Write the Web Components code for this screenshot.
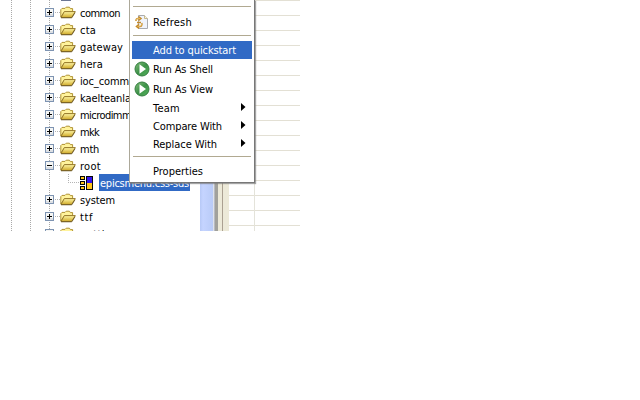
<!DOCTYPE html>
<html lang="en"><head><meta charset="utf-8"><title>Navigator</title>
<style>html,body{margin:0;background:#fff}body{width:640px;height:400px;overflow:hidden}</style></head><body>
<app-workbench></app-workbench>
<script>
const FONT = 'condensed 11px "DejaVu Sans Condensed","DejaVu Sans","Noto Sans",sans-serif';
const define = (name, html, setup) => customElements.define(name, class extends HTMLElement {
  connectedCallback() {
    if (this.shadowRoot) return;
    this.attachShadow({mode: 'open'}).innerHTML = html;
    if (setup) setup(this, this.shadowRoot);
  }
});
const add = (root, html) => {
  const t = document.createElement('template');
  t.innerHTML = html;
  root.append(t.content);
};

// A label whose tracking is adjusted to a requested width.
define('fit-label', `<style>:host{display:block;white-space:nowrap;font:${FONT};line-height:15px}span{display:inline-block}</style><span></span>`, (el, r) => {
  const s = r.querySelector('span');
  s.textContent = el.getAttribute('text');
  const w = +el.getAttribute('w');
  if (w) s.style.letterSpacing = (w - s.getBoundingClientRect().width) / s.textContent.length + 'px';
});

define('folder-icon', `<style>:host{display:block;width:16px;height:14px}svg{display:block}</style>
<svg width="16" height="14" viewBox="0 0 16 14"><defs><linearGradient id="g" x2="0" y2="1"><stop stop-color="#fff7a6"/><stop offset="1" stop-color="#cfa928"/></linearGradient></defs>
<path d="M.8 11V3.6L2 2.4h3l1.2-1.2h3.2l1 1.4h2.2v3.2H4.5z" fill="#fff39c" stroke="#b09232"/><path d="M1 11.5L4.3 5.6h11L11.6 11.5z" fill="url(#g)" stroke="#96792a"/><path d="M1 11.8h10.8l3.2-5" fill="none" stroke="#695724" stroke-width=".8"/></svg>`);

define('layout-icon', `<style>:host{display:block;width:13px;height:15px}svg{display:block}</style>
<svg width="13" height="15" shape-rendering="crispEdges"><path d="M0 1h5v4H0zM0 6h5v4H0zM0 11h5v4H0zM6 1h7v14H6z" fill="#080808"/><path d="M1 2h3v2H1zM1 7h3v2H1zM1 12h3v2H1zM7 8h5v6H7z" fill="#ffc51c"/><path d="M7 2h5v6H7z" fill="#3212ed"/></svg>`);

define('tree-toggle', `<style>:host{display:block;width:9px;height:9px}svg{display:block}</style>
<svg width="9" height="9" shape-rendering="crispEdges"><path d="M0 0h9v9H0z" fill="#7e94b2"/><path d="M1 1h7v7H1z" fill="#f5f6f5"/><path d="M1 6h7v2H1z" fill="#dcdfe3"/><path d="M2 4h5v1H2z" fill="#000"/><path class="v" d="M4 2h1v5H4z" fill="#000"/></svg>`, (el, r) => {
  if (el.hasAttribute('open')) r.querySelector('.v').remove();
});

define('tree-row', `<style>:host{display:grid;grid-template-columns:9px 6px 16px 1fr;align-items:center;height:17px;padding-left:45px}
i{height:1px;background:repeating-linear-gradient(90deg,transparent 0 1px,#b4b4b4 1px 2px)}
fit-label{margin-left:4px;margin-top:2px}
:host([leaf]){grid-template-columns:11px 13px 1fr;padding-left:69px;position:relative}
:host([leaf])::before{content:"";position:absolute;left:68px;top:0;height:9px;width:1px;background:repeating-linear-gradient(#b4b4b4 0 1px,transparent 1px 2px)}
.sel{background:#316ac5;color:#fff;margin-left:6px;width:91px;height:17px;padding:2px 0 0 1px;box-sizing:border-box}
.sel fit-label{margin:0}</style>`, (el, r) => {
  const t = el.getAttribute('text'), w = el.getAttribute('w'), label = `<fit-label text="${t}" w="${w}"></fit-label>`;
  add(r, el.hasAttribute('leaf') ? `<i></i><layout-icon></layout-icon><div class="sel">${label}</div>`
    : `<tree-toggle ${el.hasAttribute('open') ? 'open' : ''}></tree-toggle><i></i><folder-icon></folder-icon>${label}`);
});

const rows = [['common',40],['cta',16],['gateway',43],['hera',23],['ioc_common',61],['kaelteanla',51],['microdimm',51],['mkk',19],['mth',19],['root',21,'open'],['epicsmenu.css-sds',89,'leaf'],['system',35],['ttf',13],['netti',25]];
define('resource-tree', `<style>:host{display:block;height:231px;overflow:hidden;
background:repeating-linear-gradient(transparent 0 1px,#fff 1px 2px),linear-gradient(90deg,transparent 11px,#a9a9a9 11px 12px,transparent 12px 30px,#a9a9a9 30px 31px,transparent 31px 49px,#a9a9a9 49px 50px,transparent 50px)}
.cut{width:10px;height:1px;margin:0 0 3px 61px;background:#6c7793}</style><div class="cut"></div><div class="rows"></div>`, (el, r) => {
  r.querySelector('.rows').innerHTML = rows.map(([t, w, f]) => `<tree-row text="${t}" w="${w}" ${f || ''}></tree-row>`).join('');
});

define('pane-edge', `<style>:host{display:grid;grid-template-columns:13px 2px 3px 4px 1px 6px;height:231px}
i:nth-of-type(1){background:linear-gradient(90deg,#b7c9f6,#c5d4ff 3px,#b9cbf7)}i:nth-of-type(2){background:linear-gradient(90deg,#f2f5ff,#a4a7ad)}i:nth-of-type(3){background:#a1a19c}i:nth-of-type(4){background:#ece9d8}i:nth-of-type(5){background:#aaa091}i:nth-of-type(6){background:#ece9d8}</style><i></i><i></i><i></i><i></i><i></i><i></i>`);

define('table-grid', `<style>:host{display:block;height:231px;background:linear-gradient(90deg,transparent 25px,#e4e3da 25px 26px,transparent 26px),repeating-linear-gradient(#e3e0d4 0 1px,#fff 1px 15px)}</style>`);

define('play-icon', `<style>:host{display:block}svg{display:block}</style><svg width="16" height="16"><defs><linearGradient id="g" x2="1" y2="1"><stop stop-color="#82bd79"/><stop offset=".5" stop-color="#3d9148"/><stop offset="1" stop-color="#55b45d"/></linearGradient></defs><circle cx="8" cy="8" r="7" fill="url(#g)" stroke="#347e40"/><path d="M5.5 3.2L12 8l-6.5 4.8z" fill="#fff"/></svg>`);
define('refresh-icon', `<style>:host{display:block}svg{display:block}</style><svg width="16" height="16"><path d="M4.5 1.5h6l3 3v10h-9z" fill="#eff3fb" stroke="#a9abb0"/><path d="M10.5 1.5v3h3" fill="#fff7d9" stroke="#c7b98c"/><path d="M2 7Q1.8 4.5 4 4.5h2M4.5 2.5l2.5 2-2.5 2M3 8.5h4M7.8 9q.6 3.5-2 3.5H3M5 10.3l-2.5 2.2L5 14.3" fill="none" stroke="#c48a2c" stroke-width="1.5"/><path d="M2.2 6.4q.2-1.9 2-1.9h2M7.5 9.5q.3 2.8-1.8 2.9H3.5" fill="none" stroke="#ffd977" stroke-width=".6"/></svg>`);

define('menu-item', `<style>:host{display:grid;grid-template-columns:19px 1fr 6px;align-items:center;padding-left:2px;padding-right:5px}
:host([selected]){background:#316ac5;color:#fff}svg{display:block;margin-top:-2px}</style>`, (el, r) => {
  const icon = el.getAttribute('icon'), h = el.getAttribute('h');
  el.style.height = h + 'px';
  add(r, `<div>${icon ? `<${icon}-icon></${icon}-icon>` : ''}</div><fit-label text="${el.getAttribute('text')}" w="${el.getAttribute('w')}"></fit-label>` + (el.hasAttribute('sub') ? '<svg width="5" height="8"><path d="M0 0L4.5 4 0 8z"/></svg>' : ''));
});

define('menu-rule', `<style>:host{display:block;height:1px;background:#b1a991;margin:0 1px}</style>`);

define('context-menu', `<style>:host{display:block;box-sizing:border-box;width:126px;height:183px;background:#fff;border:solid #aca899;border-width:0 1px 1px;border-right-color:#777;border-bottom-color:#777;box-shadow:1px 1px 1px #777a;padding:6px 2px 0}
div{height:var(--h)}</style>
<menu-rule></menu-rule><div style="--h:5px"></div>
<menu-item icon="refresh" text="Refresh" w="39" h="20"></menu-item><div style="--h:3px"></div>
<menu-rule></menu-rule><div style="--h:5px"></div>
<menu-item selected text="Add to quickstart" w="83" h="18"></menu-item>
<menu-item icon="play" text="Run As Shell" w="60" h="20"></menu-item>
<menu-item icon="play" text="Run As View" w="60" h="20"></menu-item>
<menu-item sub text="Team" w="27" h="18"></menu-item>
<menu-item sub text="Compare With" w="69" h="18"></menu-item>
<menu-item sub text="Replace With" w="64" h="18"></menu-item><div style="--h:3px"></div>
<menu-rule></menu-rule><div style="--h:5px"></div>
<menu-item text="Properties" w="50" h="19"></menu-item>`);

define('app-workbench', `<style>:host{display:grid;position:relative;grid-template-columns:200px 29px 71px;width:300px;height:231px;overflow:hidden;color:#000}
context-menu{position:absolute;left:129px;top:0}</style>
<resource-tree></resource-tree><pane-edge></pane-edge><table-grid></table-grid><context-menu></context-menu>`);
</script></body></html>
